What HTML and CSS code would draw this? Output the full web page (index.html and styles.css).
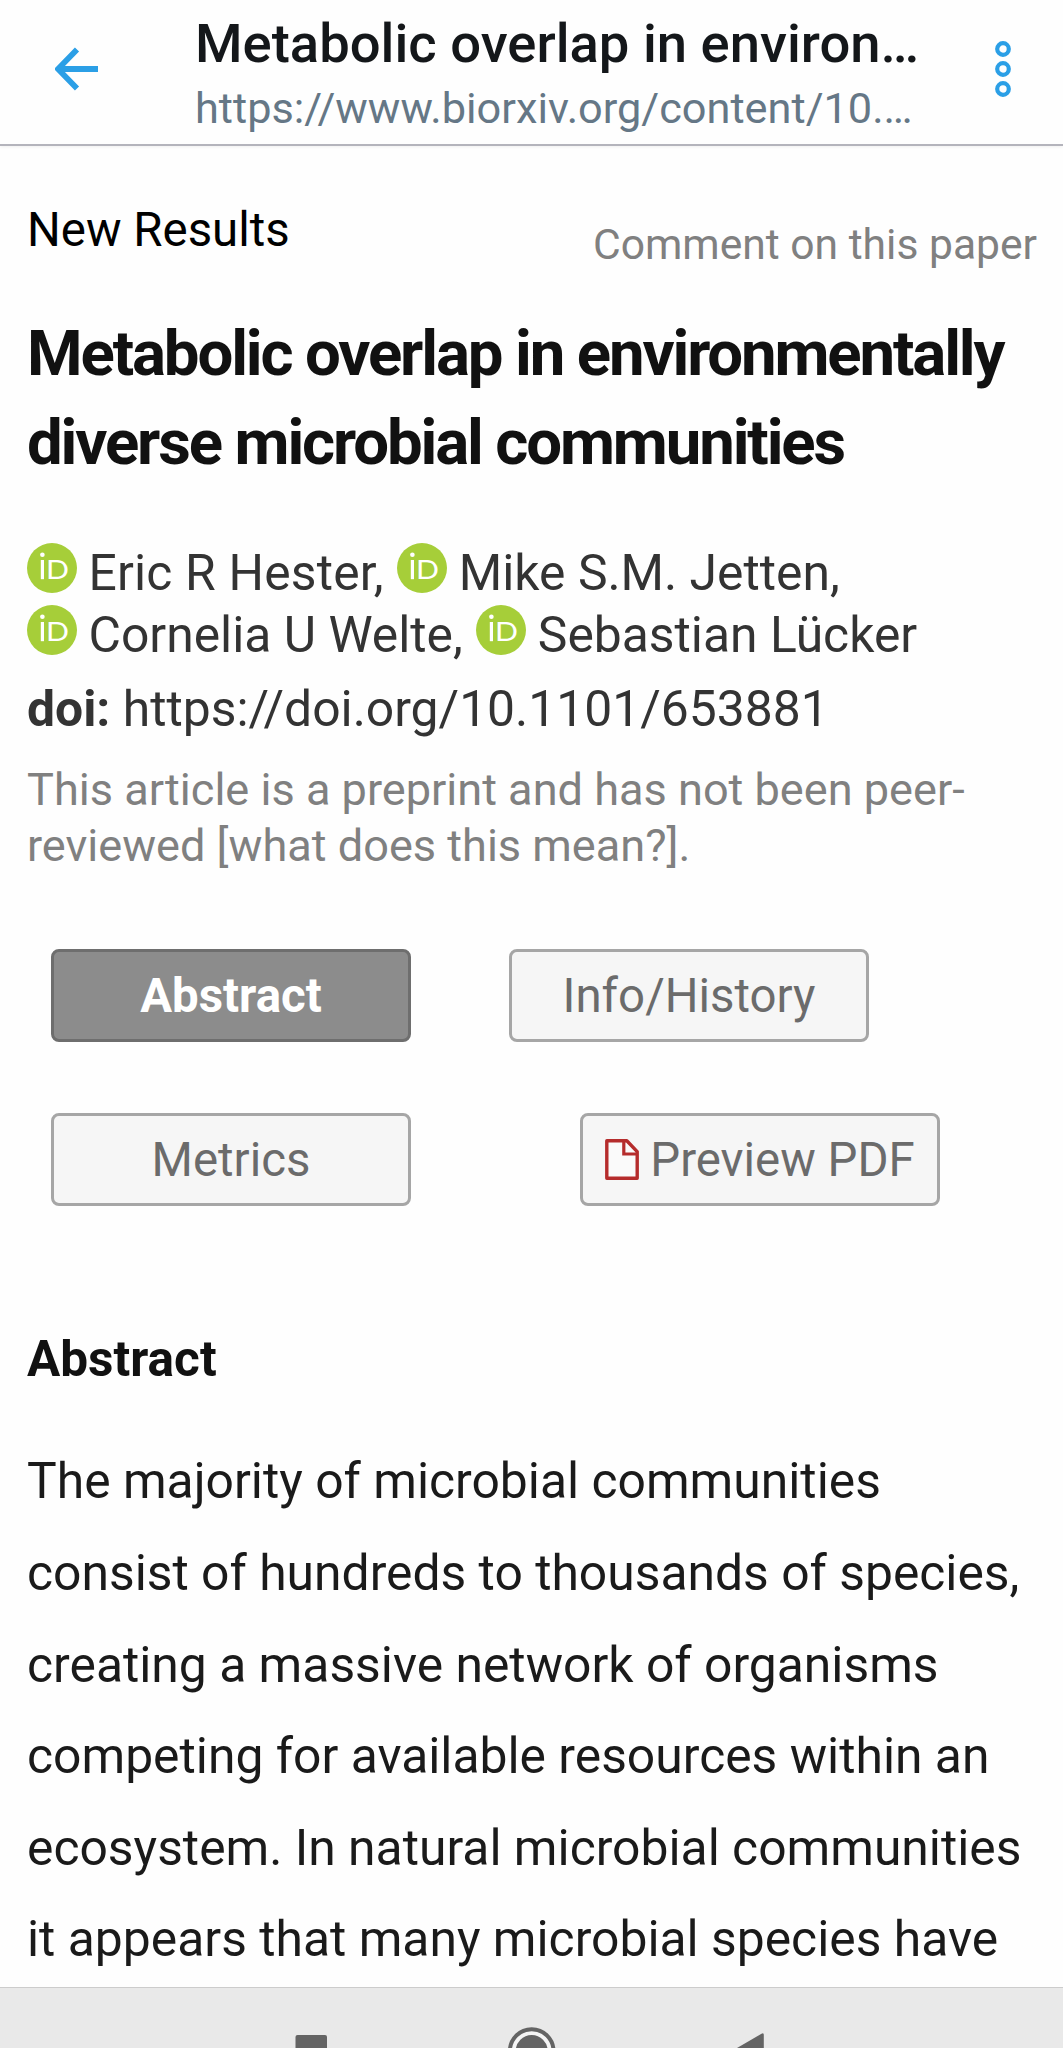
FILE: index.html
```html
<!DOCTYPE html>
<html lang="en">
<head>
    <meta charset="UTF-8">
    <meta name="viewport" content="width=device-width, initial-scale=1.0">
    <title>Metabolic overlap in environmentally diverse microbial communities</title>
    <link rel="stylesheet" href="styles.css">
</head>
<body>
    <svg class="defs">
        <symbol id="orcid" viewBox="0 0 50 50">
            <circle cx="25" cy="25" r="25" fill="#a6ce39"/>
            <circle cx="15.4" cy="11.7" r="2.3" fill="#fff"/>
            <rect x="13.8" y="17" width="3.2" height="19.2" fill="#fff"/>
            <text class="orcid-text" x="19" y="35.7" textLength="23" lengthAdjust="spacingAndGlyphs">D</text>
        </symbol>
    </svg>

    <header class="topbar">
        <svg class="back" width="44" height="46" viewBox="0 0 44 46">
            <path d="M43 23H4M22 3.5L3 23l19 19.5" fill="none" stroke="#2b9fe6" stroke-width="5.8"/>
        </svg>
        <div class="page-info">
            <div class="page-title">Metabolic overlap in environ…</div>
            <div class="page-url">https://www.biorxiv.org/content/10.…</div>
        </div>
        <svg class="menu" width="18" height="60" viewBox="0 0 18 60">
            <g fill="none" stroke="#2b9fe6" stroke-width="4.2">
                <circle cx="9" cy="10" r="5.8"/>
                <circle cx="9" cy="30" r="5.8"/>
                <circle cx="9" cy="50" r="5.8"/>
            </g>
        </svg>
    </header>

    <main class="content">
        <div class="meta">
            <span class="category">New Results</span>
            <a class="comment">Comment on this paper</a>
        </div>
        <h1>Metabolic overlap in environmentally diverse microbial communities</h1>
        <div class="authors">
            <span class="author"><svg class="orcid"><use href="#orcid"/></svg>Eric R Hester,</span>
            <span class="author"><svg class="orcid"><use href="#orcid"/></svg>Mike S.M. Jetten,</span>
            <span class="author"><svg class="orcid"><use href="#orcid"/></svg>Cornelia U Welte,</span>
            <span class="author"><svg class="orcid"><use href="#orcid"/></svg>Sebastian Lücker</span>
        </div>
        <div class="doi"><b>doi:</b> https://doi.org/10.1101/653881</div>
        <div class="notice">This article is a preprint and has not been peer-reviewed [what does this mean?].</div>

        <div class="tabs">
            <a class="tab active">Abstract</a>
            <a class="tab">Info/History</a>
        </div>
        <div class="tabs tabs-second">
            <a class="tab">Metrics</a>
            <a class="tab">
                <svg class="pdf" width="34" height="41" viewBox="0 0 34 41">
                    <path d="M1.8 1.8h20l10.400 10.800v26.600H1.800z" fill="#fafafa" stroke="#b52c2c" stroke-width="3.400" stroke-linejoin="round"/>
                    <path d="M18.800 2v13h14" fill="none" stroke="#b52c2c" stroke-width="3.200"/>
                </svg>Preview PDF
            </a>
        </div>

        <h2>Abstract</h2>
        <p>The majority of microbial communities consist of hundreds to thousands of species, creating a massive network of organisms competing for available resources within an ecosystem. In natural microbial communities it appears that many microbial species have</p>
    </main>

    <nav class="navbar">
        <svg width="1063" height="60" viewBox="0 0 1063 60">
            <rect x="295.5" y="47" width="31.5" height="32" rx="2" fill="#646464"/>
            <circle cx="531.7" cy="63" r="22" fill="#f4f4f4"/>
            <circle cx="531.7" cy="63" r="16" fill="#646464"/>
            <circle cx="531.7" cy="63" r="21.8" fill="none" stroke="#646464" stroke-width="4"/>
            <path d="M763.8 47q0-2.5-2.3-1.2L731 63.500l32.800 18z" fill="#646464"/>
        </svg>
    </nav>
</body>
</html>
```
FILE: styles.css
```css
* {
    box-sizing: border-box;
}
body {
    margin: 0;
    height: 2048px;
    display: flex;
    flex-direction: column;
    overflow: hidden;
    background: #fefefe;
    font-family: Roboto, "Liberation Sans", sans-serif;
}
.defs {
    display: none;
}

/* browser bar */
.topbar {
    flex: none;
    display: flex;
    align-items: flex-start;
    height: 146px;
    padding: 9px 51px 0 55px;
    border-bottom: 2px solid #b4b4bc;
    box-shadow: 0 1px 3px rgba(0,0,0,0.06);
}
.back {
    margin-top: 37px;
}
.page-info {
    flex: 1;
    margin-left: 96px;
    white-space: nowrap;
}
.page-title {
    font-size: 54.4px;
    font-weight: 500;
    line-height: 70px;
    color: #14171a;
}
.page-url {
    font-size: 43.3px;
    line-height: 60px;
    color: #657786;
}
.menu {
    margin-top: 30px;
}

/* article */
.content {
    flex: 1;
    min-height: 0;
    overflow: hidden;
    padding: 54px 26px 0 27px;
}
.meta {
    display: flex;
    justify-content: space-between;
    line-height: 60px;
}
.category {
    font-size: 47.4px;
    color: #000;
}
.comment {
    margin-top: 14px;
    font-size: 42.6px;
    color: #808080;
}
h1 {
    margin: 34.6px 0 55px;
    font-size: 63.5px;
    font-weight: 700;
    line-height: 89.3px;
    letter-spacing: -2.13px;
    color: #111;
}
.authors {
    display: flex;
    flex-wrap: wrap;
    column-gap: 13.5px;
    font-size: 49.8px;
    line-height: 62px;
    color: #333;
}
.author {
    display: flex;
    align-items: center;
}
.author:first-child {
    letter-spacing: 0.18px;
}
.orcid {
    width: 50px;
    height: 50px;
    margin: 0 11.5px 11px 0;
}
.orcid-text {
    font-family: Lato, sans-serif;
    font-size: 26.5px;
    letter-spacing: 0;
    fill: #fff;
}
.doi {
    margin-top: 13px;
    font-size: 49.8px;
    line-height: 60px;
    color: #333;
}
.notice {
    margin-top: 22.6px;
    font-size: 45.1px;
    line-height: 56px;
    color: #808080;
}
.tabs {
    display: flex;
    gap: 98px;
    margin-top: 75.6px;
    padding-left: 24px;
}
.tabs-second {
    gap: 169px;
    margin-top: 71px;
}
.tab {
    display: flex;
    justify-content: center;
    align-items: center;
    width: 360px;
    height: 93px;
    border: 3px solid #a6a6a6;
    border-radius: 8px;
    background: #f6f6f6;
    color: #6b6b6b;
    font-size: 47.4px;
}
.tab.active {
    border-color: #6e6e6e;
    background: #8c8c8c;
    color: #fff;
    font-weight: 700;
}
.pdf {
    margin-right: 11px;
}
h2 {
    margin: 123px 0 47px;
    font-size: 49.5px;
    font-weight: 700;
    line-height: 60px;
    color: #111;
}
p {
    margin: 0;
    font-size: 49.8px;
    line-height: 91.6px;
    color: #1a1a1a;
}

/* system navigation */
.navbar {
    flex: none;
    height: 61px;
    border-top: 1px solid #ccc;
    background: #e9e9e9;
}
```
